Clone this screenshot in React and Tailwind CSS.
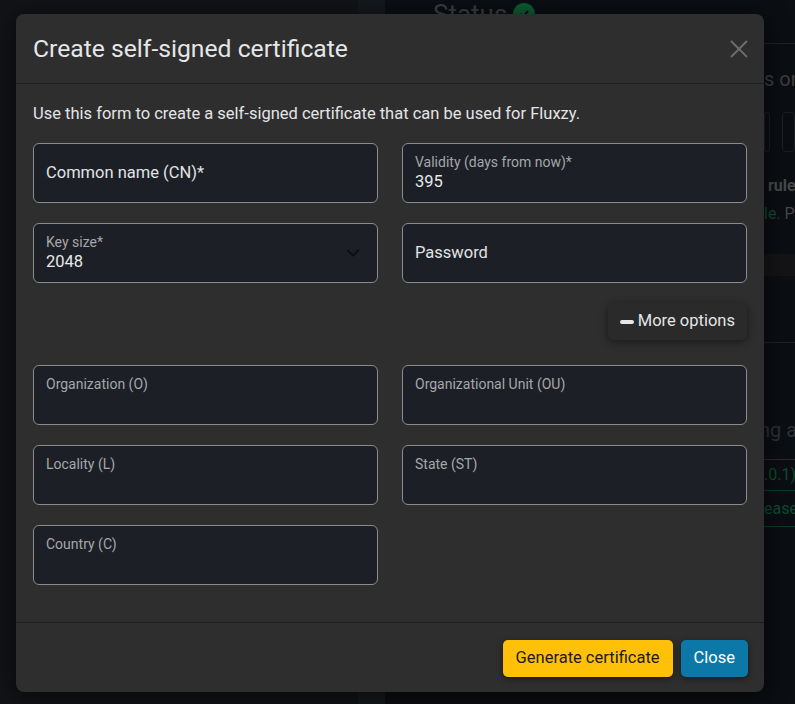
import React from "react";

function Field({ label, value, placeholder, select }) {
  if (placeholder) {
    return (
      <div className="h-[60px] rounded-[6px] border border-[#8a8c8f] bg-[#1c1f25] px-[12px] flex items-center">
        <span className="text-[16.5px] text-[#e1e3e5]">{placeholder}</span>
      </div>
    );
  }
  return (
    <div className="relative h-[60px] rounded-[6px] border border-[#8a8c8f] bg-[#1c1f25] px-[12px] pt-[9px]">
      <div className="text-[14px] leading-[18px] text-[#a4a7ab]">{label}</div>
      {value && (
        <div className="text-[16.5px] leading-[22px] text-[#e6e8ea]">{value}</div>
      )}
      {select && (
        <svg
          className="absolute right-[17px] top-[22px]"
          width="14"
          height="14"
          viewBox="0 0 16 16"
          fill="none"
          stroke="#0b0d11"
          strokeWidth="2"
          strokeLinecap="round"
          strokeLinejoin="round"
        >
          <path d="M2 5l6 6 6-6" />
        </svg>
      )}
    </div>
  );
}

export default function App() {
  return (
    <div
      className="relative h-[704px] w-[795px] overflow-hidden bg-[#0c0f13]"
      style={{ fontFamily: "Roboto, 'Liberation Sans', sans-serif" }}
    >
      {/* dimmed page behind the dialog */}
      <div className="flex h-full">
        <div className="w-[358px] bg-[#111316]" />
        <div className="w-[27px] bg-[#15181c]" />
        <div className="flex-1 overflow-hidden whitespace-nowrap bg-[#0b0e12]">
          <div className="flex items-center gap-[6px] pl-[48px] -mt-[2px] h-[32px]">
            <span className="text-[26px] text-[#3a3d41]">Status</span>
            <span className="w-[22px] h-[22px] rounded-full bg-[#0d5a32] flex items-center justify-center">
              <svg width="12" height="12" viewBox="0 0 12 12" fill="none" stroke="#0b0e12" strokeWidth="2">
                <path d="M2 6l3 3 5-6" />
              </svg>
            </span>
          </div>
          <div className="mt-[13px] border-t border-[#1f2226]" />
          <div className="pl-[379px] mt-[20px] text-[20px] text-[#3b3e42]">s on port</div>
          <div className="pl-[379px] mt-[18px] flex gap-[12px]">
            <div className="w-[14px] h-[40px] rounded-[4px] border border-[#1c1f24]" />
            <div className="w-[40px] h-[40px] rounded-[4px] border border-[#1c1f24]" />
          </div>
          <div className="pl-[383px] mt-[22px] text-[16px] font-bold text-[#45484c]">rules</div>
          <div className="pl-[379px] mt-[4px] text-[16px] text-[#45484c]">
            <span className="text-[#0e4a30]">le</span>
            <span className="text-[#0a3a52]">.</span> Please
          </div>
          <div className="mt-[28px] h-[22px] bg-[#141416]" />
          <div className="mt-[66px] border-t border-[#1f2226]" />
          <div className="pl-[374px] mt-[72px] text-[20px] text-[#2e3135]">ng app</div>
          <div className="pl-[379px] mt-[14px]">
            <div className="border-y border-[#0d3a28] h-[32px] flex items-center text-[16px] text-[#0e4a30]">.0.1)</div>
            <div className="border-b border-[#0d3a28] h-[36px] flex items-center text-[16px] text-[#0e4a30]">ease</div>
          </div>
        </div>
      </div>

      {/* dialog */}
      <div className="absolute left-[16px] top-[14px] w-[748px] h-[678px] rounded-[8px] bg-[#2e2e2e] shadow-[0_4px_24px_rgba(0,0,0,0.6)] flex flex-col">
        <div className="h-[70px] flex items-center justify-between pl-[17px] pr-[16px] border-b border-[#1e1e1e]">
          <h1 className="text-[24.7px] text-[#e4e6e8]">Create self-signed certificate</h1>
          <svg width="18" height="18" viewBox="0 0 18 18" stroke="#6d6d6d" strokeWidth="1.8">
            <path d="M1 1l16 16M17 1L1 17" />
          </svg>
        </div>

        <div className="flex-1 px-[17px] pt-[19px]">
          <p className="text-[16.5px] leading-[22px] text-[#e2e4e6]">
            Use this form to create a self-signed certificate that can be used for Fluxzy.
          </p>

          <div className="mt-[18px] grid grid-cols-2 gap-x-[24px] gap-y-[20px]">
            <Field placeholder="Common name (CN)*" />
            <Field label="Validity (days from now)*" value="395" />
            <Field label="Key size*" value="2048" select />
            <Field placeholder="Password" />
          </div>

          <div className="mt-[20px] flex justify-end">
            <button className="h-[37px] pl-[12px] pr-[12px] rounded-[6px] bg-[#2a2a2a] shadow-[0_2px_8px_rgba(0,0,0,0.45)] flex items-center gap-[4px] text-[16.5px] text-[#e3e5e7]">
              <span className="w-[14px] h-[4px] rounded-[2px] bg-[#e6e6e6]" />
              More options
            </button>
          </div>

          <div className="mt-[25px] grid grid-cols-2 gap-x-[24px] gap-y-[20px]">
            <Field label="Organization (O)" />
            <Field label="Organizational Unit (OU)" />
            <Field label="Locality (L)" />
            <Field label="State (ST)" />
            <Field label="Country (C)" />
          </div>
        </div>

        <div className="h-[70px] border-t border-[#1e1e1e] flex items-center justify-end gap-[8px] pr-[16px] pt-[1px]">
          <button className="h-[37px] px-[13px] rounded-[5px] bg-[#ffc107] text-[16.5px] text-[#1b1b1b] shadow-[0_2px_6px_rgba(0,0,0,0.4)]">
            Generate certificate
          </button>
          <button className="h-[37px] px-[13px] rounded-[5px] bg-[#0b78a8] text-[16.5px] text-white shadow-[0_2px_6px_rgba(0,0,0,0.4)]">
            Close
          </button>
        </div>
      </div>
    </div>
  );
}
